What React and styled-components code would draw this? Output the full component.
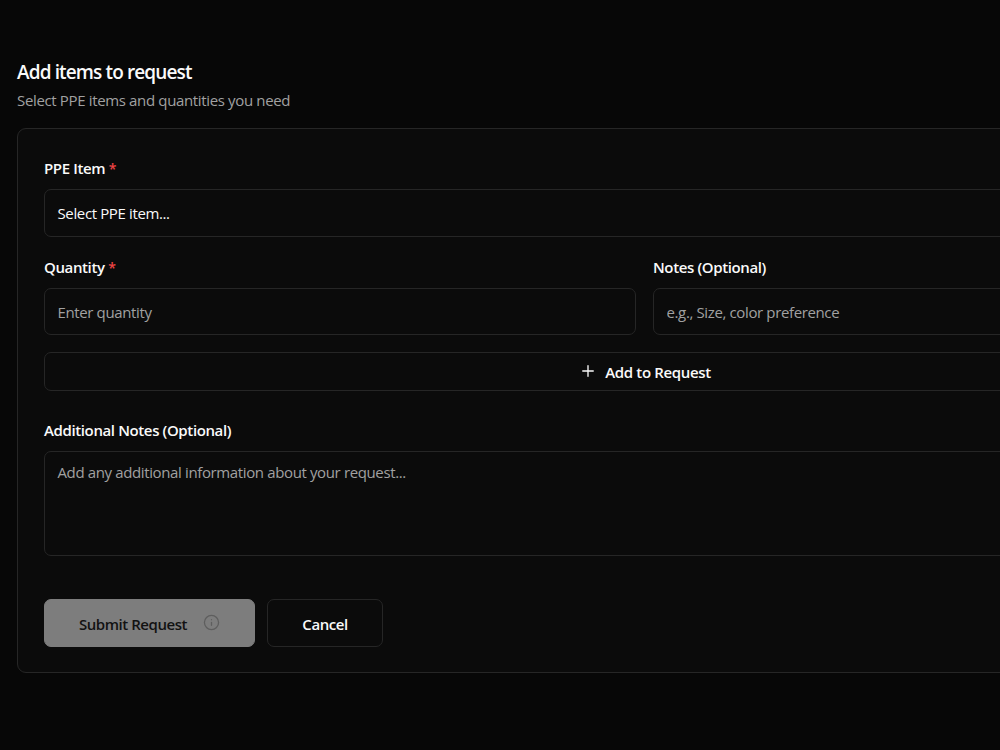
import React from "react";
import styled, { createGlobalStyle } from "styled-components";
import { Info, Plus } from "lucide-react";

const GlobalStyle = createGlobalStyle`
  * {
    box-sizing: border-box;
  }

  body {
    margin: 0;
    height: 750px;
    overflow: hidden;
    background-color: #070707;
    color: #fafafa;
    font-family: "Segoe UI", "Open Sans", "Noto Sans", sans-serif;
    font-size: 15px;
    line-height: 20px;
  }
`;

const Page = styled.main`
  width: 1290px;
  padding: 60px 17px 0;
`;

const Title = styled.h2`
  margin: 0;
  font-size: 19px;
  line-height: 24px;
  font-weight: 600;
  letter-spacing: -0.87px;
`;

const Subtitle = styled.p`
  margin: 6px 0 18px;
  color: #a1a1a1;
  letter-spacing: -0.35px;
`;

const Card = styled.form`
  height: 545px;
  padding: 30px 26px 0;
  border: 1px solid #262626;
  border-radius: 9px;
  background-color: #0b0b0b;
`;

const Columns = styled.div`
  display: grid;
  grid-template-columns: 592px 592px;
  column-gap: 17px;
  margin: 21px 0 17px;
`;

const Label = styled.label`
  display: block;
  margin-bottom: 11px;
  margin-top: -1px;
  font-weight: 600;
  letter-spacing: -0.38px;
`;

const Required = styled.span`
  color: #ef4444;
  font-size: 14px;
  line-height: 1;
`;

const Field = styled.input`
  display: block;
  width: 100%;
  height: ${(props) => props.$height || "47px"};
  padding: 1px 12.5px 0;
  border: 1px solid #262626;
  border-radius: 7px;
  outline: none;
  background-color: #0b0b0b;
  color: #fafafa;
  font: inherit;
  letter-spacing: -0.37px;

  &::placeholder {
    color: #a1a1a1;
    opacity: 1;
  }
`;

const Select = styled(Field).attrs({ as: "button", type: "button" })`
  padding-bottom: 1px;
  text-align: left;
`;

const TextArea = styled(Field).attrs({ as: "textarea" })`
  padding-top: 10px;
  resize: none;
`;

const Button = styled.button`
  display: flex;
  align-items: center;
  justify-content: center;
  width: ${(props) => props.$width || "100%"};
  height: ${(props) => props.$height || "48px"};
  padding: 1px 0 0;
  border: 1px solid #262626;
  border-radius: 7px;
  background-color: #0b0b0b;
  color: #fafafa;
  font: inherit;
  font-weight: 600;
  letter-spacing: -0.45px;
`;

const AddButton = styled(Button)`
  margin-bottom: 30px;
  gap: 8px;
  letter-spacing: -0.34px;

  svg {
    margin-top: -3px;
  }
`;

const SubmitButton = styled(Button)`
  border-color: #7d7d7d;
  background-color: #7d7d7d;
  color: #121212;
  gap: 16px;

  svg {
    margin-top: -2px;
    color: #5e5e5e;
  }
`;

const Actions = styled.div`
  display: flex;
  gap: 12px;
  margin-top: 43px;
`;

export default function App() {
  return (
    <>
      <GlobalStyle />
      <Page>
        <Title>Add items to request</Title>
        <Subtitle>Select PPE items and quantities you need</Subtitle>
        <Card onSubmit={(e) => e.preventDefault()}>
          <Label htmlFor="item">
            PPE Item <Required>*</Required>
          </Label>
          <Select id="item" $height="48px">
            Select PPE item...
          </Select>

          <Columns>
            <div>
              <Label htmlFor="quantity">
                Quantity <Required>*</Required>
              </Label>
              <Field id="quantity" placeholder="Enter quantity" />
            </div>
            <div>
              <Label htmlFor="notes">Notes (Optional)</Label>
              <Field id="notes" placeholder="e.g., Size, color preference" />
            </div>
          </Columns>

          <AddButton type="button" $height="39px">
            <Plus size={18} strokeWidth={1.8} />
            Add to Request
          </AddButton>

          <Label htmlFor="additional">Additional Notes (Optional)</Label>
          <TextArea
            id="additional"
            $height="105px"
            placeholder="Add any additional information about your request..."
          />

          <Actions>
            <SubmitButton type="submit" $width="211px" disabled>
              Submit Request
              <Info size={17} strokeWidth={1.8} />
            </SubmitButton>
            <Button type="button" $width="116px">
              Cancel
            </Button>
          </Actions>
        </Card>
      </Page>
    </>
  );
}
